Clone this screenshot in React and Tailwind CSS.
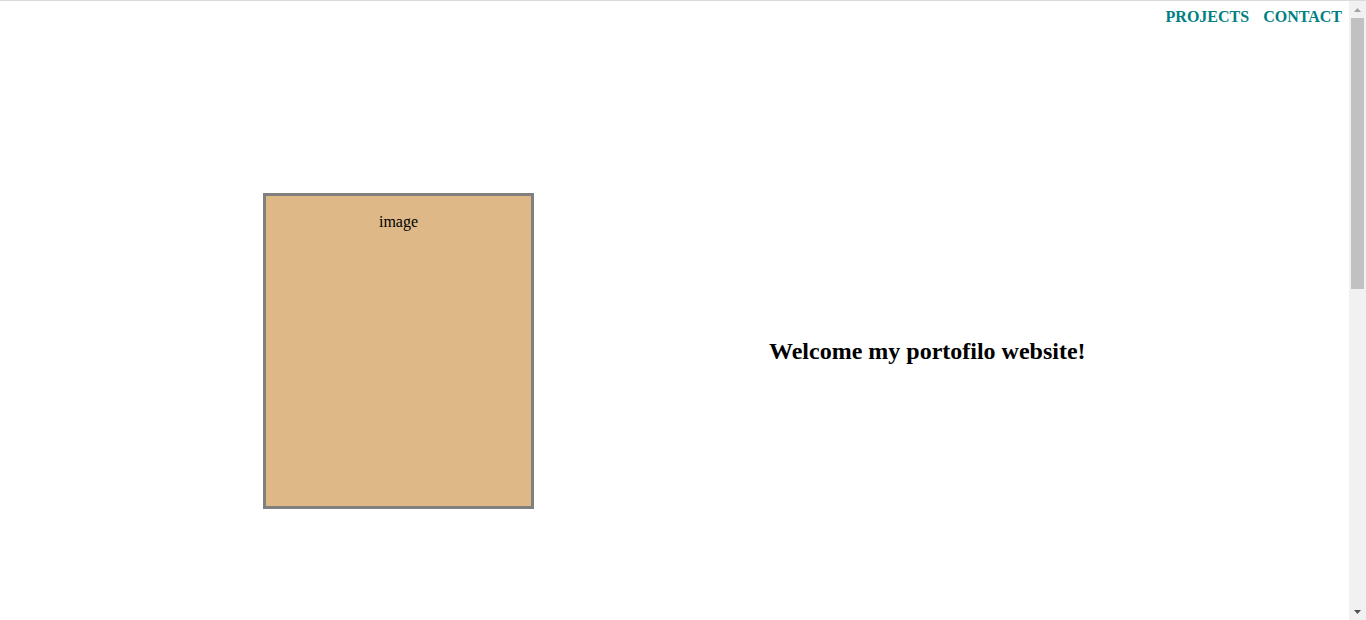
function Scrollbar() {
  return (
    <div className="flex w-[17px] shrink-0 flex-col bg-[#f1f1f1]">
      <div className="flex h-[17px] items-center justify-center">
        <svg width="7" height="4" viewBox="0 0 7 4">
          <polygon points="0,4 3.5,0 7,4" fill="#a3a3a3" />
        </svg>
      </div>
      <div className="mx-[2px] h-[271px] bg-[#c1c1c1]" />
      <div className="flex-1" />
      <div className="flex h-[17px] items-center justify-center">
        <svg width="7" height="4" viewBox="0 0 7 4">
          <polygon points="0,0 7,0 3.5,4" fill="#505050" />
        </svg>
      </div>
    </div>
  );
}

export default function App() {
  return (
    <div className="flex h-[620px] flex-col border-t border-[#dadada] bg-white font-['Liberation_Serif',serif] leading-[normal] text-black">
      <div className="flex min-h-0 flex-1">
        <div className="flex-1 overflow-hidden">
          <nav className="flex justify-end gap-[14px] pr-[7px] pt-[7px] font-bold text-[#008080]">
            <a href="#projects">PROJECTS</a>
            <a href="#contact">CONTACT</a>
          </nav>

          <main className="mt-[167px] flex items-center gap-[235px] pl-[263px]">
            <div className="h-[316px] w-[271px] border-[3px] border-[#808080] bg-[#deb887] text-center">
              <p className="mt-[17px]">image</p>
            </div>
            <h2 className="text-2xl font-bold">Welcome my portofilo website!</h2>
          </main>
        </div>
        <Scrollbar />
      </div>
    </div>
  );
}
